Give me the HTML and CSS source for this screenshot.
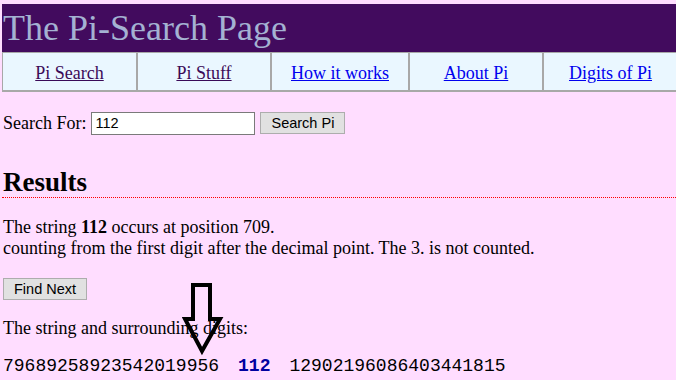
FILE: index.html
```html
<!DOCTYPE html>
<html lang="en">
<head>
  <meta charset="UTF-8">
  <title>The Pi-Search Page</title>
  <link rel="stylesheet" href="styles.css">
</head>
<body>
  <header class="masthead">
    <h1>The Pi-Search Page</h1>
  </header>
  <nav class="tabs">
    <div class="tab"><a class="seen" href="#">Pi Search</a></div>
    <div class="tab"><a class="seen" href="#">Pi Stuff</a></div>
    <div class="tab"><a href="#">How it works</a></div>
    <div class="tab"><a href="#">About Pi</a></div>
    <div class="tab"><a href="#">Digits of Pi</a></div>
  </nav>
  <main class="content">
    <form class="search">
      <label for="q">Search For:</label>
      <input type="text" id="q" value="112">
      <button type="button" class="btn">Search Pi</button>
    </form>

    <h2 class="results-title">Results</h2>
    <p class="found">The string <b>112</b> occurs at position 709.<br>counting from the first digit after the decimal point. The 3. is not counted.</p>

    <button type="button" class="btn">Find Next</button>

    <p class="around">The string and surrounding digits:</p>
    <div class="digits">79689258923542019956<span class="hit">112</span>12902196086403441815</div>

    <!-- arrow drawn on top of the text -->
    <svg class="arrow" width="44" height="78" viewBox="0 0 44 78">
      <path d="M11 2 H28 V36 H38 L20 68 L3 36 H11 Z" fill="none" stroke="#000" stroke-width="4"/>
    </svg>
  </main>
</body>
</html>
```

FILE: styles.css
```css
body {
  margin: 4px 0 0 2px;
  background: #ffddff;
  font-family: "Liberation Serif", "Times New Roman", serif;
  font-size: 18px;
  color: #000;
}
.masthead {
  background: #420b5e;
  height: 48px;
}
.masthead h1 {
  margin: 0;
  font-weight: normal;
  font-size: 36px;
  line-height: 48px;
  color: #a4b2d2;
  padding-left: 1px;
}
.tabs {
  display: grid;
  grid-template-columns: 135px 134px 138px 134px 1fr;
  width: 676px;
  border-top: 1px solid #a8a8a8;
  border-left: 1px solid #a8a8a8;
  border-bottom: 2px solid #a8a8a8;
}
.tab {
  height: 37px;
  background: #eaf7ff;
  border-right: 2px solid #a8a8a8;
  display: flex;
  justify-content: center;
  align-items: center;
  padding-top: 3px;
  box-sizing: border-box;
}
.tab a {
  color: #0000ee;
}
.tab a.seen {
  color: #3a0a58;
}
.content {
  position: relative;
  padding: 19px 0 0 1px;
}
.search {
  margin: 0;
  display: flex;
  align-items: center;
  height: 24px;
}
.search label {
  margin-right: 5px;
}
.search input {
  width: 164px;
  height: 23px;
  box-sizing: border-box;
  border: 1px solid #7a7a7a;
  padding: 1px 3px;
  font-family: "Liberation Sans", Arial, sans-serif;
  font-size: 14.5px;
  margin: 0 5px 0 0;
}
.btn {
  font-family: "Liberation Sans", Arial, sans-serif;
  font-size: 14.5px;
  background: #e1e1e1;
  border: 1px solid #adadad;
  padding: 0 10px;
  height: 22px;
  color: #000;
  margin: 0;
}
.results-title {
  font-size: 27px;
  line-height: 30px;
  margin: 32px 0 0 -1px;
  padding: 0 0 0 1px;
  border-bottom: 1px dotted #ff0000;
}
.found {
  line-height: 21px;
  margin: 19px 0 19px 0;
}
.around {
  margin: 18px 0 17px 0;
}
.digits {
  font-family: "Liberation Mono", "Courier New", monospace;
  font-size: 18px;
}
.digits .hit {
  font-weight: bold;
  color: #0000a0;
  margin: 0 19px;
}
.arrow {
  position: absolute;
  left: 180px;
  top: 191px;
}
```
